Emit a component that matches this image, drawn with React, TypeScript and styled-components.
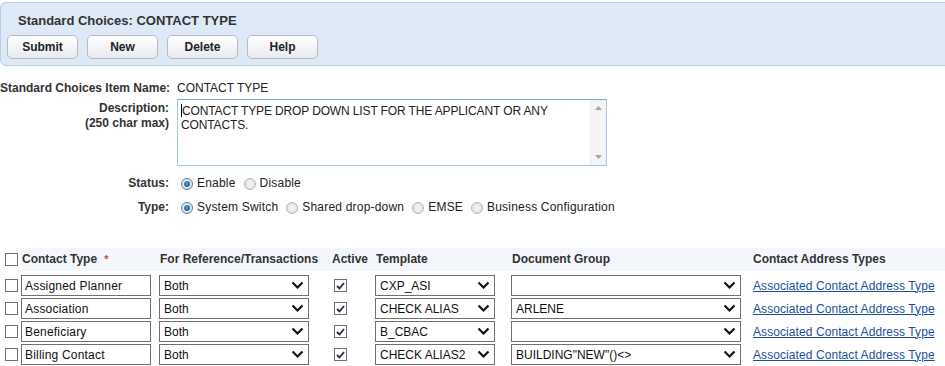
import * as React from 'react';
import styled, { createGlobalStyle } from 'styled-components';

const GlobalStyle = createGlobalStyle`
  body {
    margin: 0;
    background: #fff;
    font-family: "Liberation Sans", Arial, sans-serif;
    font-size: 12px;
    color: #222;
    overflow: hidden;
  }
`;

const Page = styled.div`
  width: 945px;
  height: 366px;
  overflow: hidden;
`;

const HeaderPanel = styled.div`
  margin-top: 2px;
  margin-right: -12px;
  height: 64px;
  box-sizing: border-box;
  padding: 10px 0 0 6px;
  background: #dde9f6;
  border: 1px solid #b7cfe9;
  border-radius: 6px 0 0 6px;
`;

const Title = styled.div`
  padding-left: 11px;
  font-size: 13px;
  font-weight: bold;
  color: #333;
  line-height: 15px;
`;

const ButtonRow = styled.div`
  display: flex;
  gap: 9px;
  margin-top: 7px;
`;

const Button = styled.button`
  width: 71px;
  height: 24px;
  padding: 0;
  border: 1px solid #b9b9b9;
  border-radius: 5px;
  background: linear-gradient(#ffffff, #e6eaef);
  font-family: "Liberation Sans", Arial, sans-serif;
  font-size: 12px;
  font-weight: bold;
  color: #222;
`;

const Form = styled.div`
  display: grid;
  grid-template-columns: 169px 1fr;
  column-gap: 8px;
  margin-top: 15px;
  align-items: start;
`;

const Label = styled.div<{ $top?: number }>`
  text-align: right;
  white-space: nowrap;
  font-weight: bold;
  color: #333;
  line-height: 15px;
  padding-top: ${p => p.$top ?? 0}px;
`;

const Value = styled.div`
  line-height: 15px;
  color: #222;
`;

const TextArea = styled.div`
  margin-top: 3px;
  width: 430px;
  height: 67px;
  box-sizing: border-box;
  border: 1px solid #a9c6e2;
  border-top-color: #7ea7d4;
  display: flex;
  background: #fff;
`;

const TextAreaText = styled.div`
  flex: 1;
  padding: 4px 3px 2px;
  line-height: 14px;
  letter-spacing: -0.13px;
  color: #222;
`;

const Caret = styled.span`
  display: inline-block;
  width: 1px;
  height: 13px;
  background: #000;
  vertical-align: -2px;
`;

const ScrollBar = styled.div`
  width: 15px;
  background: #f4f4f4;
  border-left: 1px solid #ececec;
  display: flex;
  flex-direction: column;
  justify-content: space-between;
  align-items: center;
  padding: 6px 0;
`;

const OptionRow = styled.div<{ $top?: number }>`
  display: flex;
  align-items: center;
  gap: 4px;
  line-height: 15px;
  padding-top: ${p => p.$top ?? 0}px;
`;

const Radio = styled.span<{ $on?: boolean }>`
  width: 12px;
  height: 12px;
  box-sizing: border-box;
  border-radius: 50%;
  border: 1px solid ${p => (p.$on ? '#5d7a99' : '#b4b4b4')};
  background: radial-gradient(circle, #f7f7f7 0%, #dcdcdc 100%);
  display: inline-flex;
  align-items: center;
  justify-content: center;
  flex: none;
  margin-left: 4px;
  &::after {
    content: '';
    display: ${p => (p.$on ? 'block' : 'none')};
    width: 6px;
    height: 6px;
    border-radius: 50%;
    background: radial-gradient(circle at 40% 35%, #4f9fdc, #0d4f8a);
  }
`;

const OptionText = styled.span`
  font-size: 12px;
  letter-spacing: 0.2px;
  color: #222;
`;

const Grid = styled.div`
  display: grid;
  grid-template-columns: 16px 138px 171px 45px 136px 241px 1fr;
  padding-left: 5px;
  margin-top: 33px;
  row-gap: 2px;
  align-items: center;
`;

const HeadCell = styled.div<{ $pad?: number }>`
  height: 23px;
  margin-bottom: 2px;
  display: flex;
  align-items: center;
  padding-bottom: 1px;
  box-sizing: border-box;
  background: #f3f7fb;
  font-weight: bold;
  color: #333;
  padding-left: ${p => p.$pad ?? 0}px;
`;

const HeadCheckCell = styled.div`
  height: 23px;
  margin-bottom: 2px;
  display: flex;
  align-items: center;
`;

const Star = styled.span`
  color: #e0402a;
  margin-left: 7px;
  font-size: 11px;
`;

const Cell = styled.div<{ $pad?: number }>`
  height: 21px;
  display: flex;
  align-items: center;
  padding-left: ${p => p.$pad ?? 0}px;
`;

const CheckBox = styled.span`
  width: 13px;
  height: 13px;
  box-sizing: border-box;
  border: 1px solid #707070;
  background: #fff;
  display: inline-flex;
  align-items: center;
  justify-content: center;
  flex: none;
`;

const TextInput = styled.div<{ $w: number }>`
  width: ${p => p.$w}px;
  height: 21px;
  box-sizing: border-box;
  border: 1px solid #707070;
  padding: 0 3px;
  display: flex;
  align-items: center;
  letter-spacing: 0.2px;
  color: #111;
  background: #fff;
`;

const SelectBox = styled.div<{ $w: number }>`
  width: ${p => p.$w}px;
  height: 21px;
  box-sizing: border-box;
  border: 1px solid #707070;
  padding: 0 4px;
  display: flex;
  align-items: center;
  justify-content: space-between;
  color: #111;
  background: #fff;
  white-space: nowrap;
`;

const Link = styled.a`
  color: #1a4f9c;
  text-decoration: underline;
  white-space: nowrap;
  padding-left: 1px;
  letter-spacing: 0.08px;
`;

const Chevron = () => (
  <svg width="13" height="9" viewBox="0 0 13 9">
    <path d="M1.5 1.5 L6.5 6.5 L11.5 1.5" fill="none" stroke="#111" strokeWidth="2.2" />
  </svg>
);

const Tick = () => (
  <svg width="9" height="8" viewBox="0 0 9 8">
    <path d="M1 4 L3.5 6.5 L8 1" fill="none" stroke="#1d2a4a" strokeWidth="1.8" />
  </svg>
);

const ArrowUp = () => (
  <svg width="7" height="4" viewBox="0 0 7 4">
    <path d="M0 4 L3.5 0 L7 4 Z" fill="#a3a3a3" />
  </svg>
);

const ArrowDown = () => (
  <svg width="7" height="4" viewBox="0 0 7 4">
    <path d="M0 0 L3.5 4 L7 0 Z" fill="#a3a3a3" />
  </svg>
);

const rows = [
  { name: 'Assigned Planner', template: 'CXP_ASI', group: '' },
  { name: 'Association', template: 'CHECK ALIAS', group: 'ARLENE' },
  { name: 'Beneficiary', template: 'B_CBAC', group: '' },
  { name: 'Billing Contact', template: 'CHECK ALIAS2', group: 'BUILDING"NEW"()<>' },
];

export default function App() {
  return (
    <Page>
      <GlobalStyle />
      <HeaderPanel>
        <Title>Standard Choices: CONTACT TYPE</Title>
        <ButtonRow>
          <Button>Submit</Button>
          <Button>New</Button>
          <Button>Delete</Button>
          <Button>Help</Button>
        </ButtonRow>
      </HeaderPanel>

      <Form>
        <Label>Standard Choices Item Name:</Label>
        <Value>CONTACT TYPE</Value>

        <Label $top={5}>
          Description:
          <br />
          (250 char max)
        </Label>
        <TextArea>
          <TextAreaText>
            <Caret />
            CONTACT TYPE DROP DOWN LIST FOR THE APPLICANT OR ANY CONTACTS.
          </TextAreaText>
          <ScrollBar>
            <ArrowUp />
            <ArrowDown />
          </ScrollBar>
        </TextArea>

        <Label $top={10}>Status:</Label>
        <OptionRow $top={10}>
          <Radio $on />
          <OptionText>Enable</OptionText>
          <Radio />
          <OptionText>Disable</OptionText>
        </OptionRow>

        <Label $top={9}>Type:</Label>
        <OptionRow $top={9}>
          <Radio $on />
          <OptionText>System Switch</OptionText>
          <Radio />
          <OptionText>Shared drop-down</OptionText>
          <Radio />
          <OptionText>EMSE</OptionText>
          <Radio />
          <OptionText>Business Configuration</OptionText>
        </OptionRow>
      </Form>

      <Grid>
        <HeadCheckCell>
          <CheckBox />
        </HeadCheckCell>
        <HeadCell $pad={1}>
          Contact Type<Star>*</Star>
        </HeadCell>
        <HeadCell $pad={1}>For Reference/Transactions</HeadCell>
        <HeadCell $pad={2}>Active</HeadCell>
        <HeadCell $pad={1}>Template</HeadCell>
        <HeadCell $pad={1}>Document Group</HeadCell>
        <HeadCell $pad={1}>Contact Address Types</HeadCell>

        {rows.map(r => (
          <React.Fragment key={r.name}>
            <Cell>
              <CheckBox />
            </Cell>
            <Cell>
              <TextInput $w={130}>{r.name}</TextInput>
            </Cell>
            <Cell>
              <SelectBox $w={150}>
                <span>Both</span>
                <Chevron />
              </SelectBox>
            </Cell>
            <Cell $pad={4}>
              <CheckBox>
                <Tick />
              </CheckBox>
            </Cell>
            <Cell>
              <SelectBox $w={120}>
                <span>{r.template}</span>
                <Chevron />
              </SelectBox>
            </Cell>
            <Cell>
              <SelectBox $w={230}>
                <span>{r.group}</span>
                <Chevron />
              </SelectBox>
            </Cell>
            <Cell>
              <Link href="#">Associated Contact Address Type</Link>
            </Cell>
          </React.Fragment>
        ))}
      </Grid>
    </Page>
  );
}
